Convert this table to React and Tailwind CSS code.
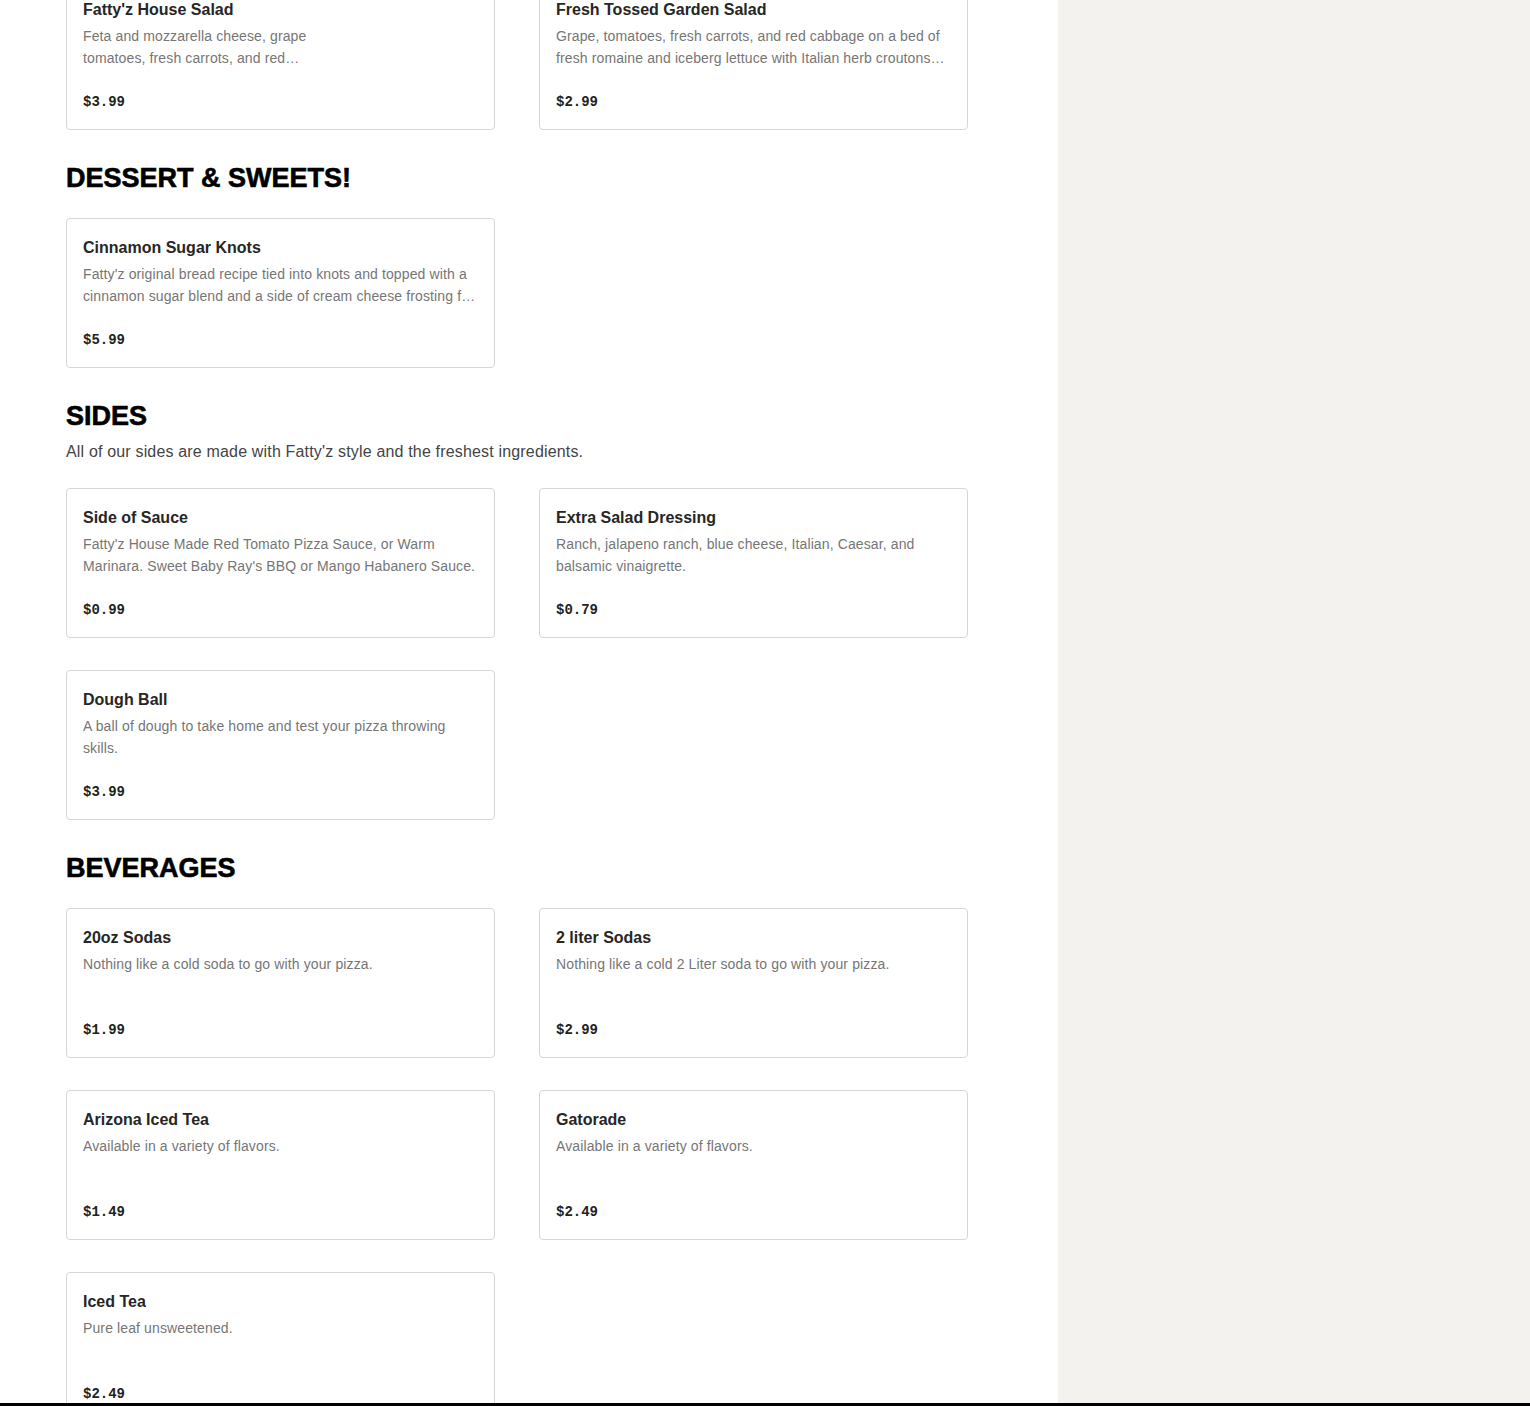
import React from "react";

const sections = [
  {
    title: null,
    items: [
      {
        name: "Fatty'z House Salad",
        desc: "Feta and mozzarella cheese, grape tomatoes, fresh carrots, and red cabbage on a bed of fresh romaine and iceberg lettuce.",
        price: "$3.99",
        narrow: true,
      },
      {
        name: "Fresh Tossed Garden Salad",
        desc: "Grape, tomatoes, fresh carrots, and red cabbage on a bed of fresh romaine and iceberg lettuce with Italian herb croutons and dressing.",
        price: "$2.99",
      },
    ],
  },
  {
    title: "Dessert & Sweets!",
    items: [
      {
        name: "Cinnamon Sugar Knots",
        desc: "Fatty'z original bread recipe tied into knots and topped with a cinnamon sugar blend and a side of cream cheese frosting for dipping.",
        price: "$5.99",
      },
    ],
  },
  {
    title: "Sides",
    note: "All of our sides are made with Fatty'z style and the freshest ingredients.",
    items: [
      {
        name: "Side of Sauce",
        desc: "Fatty'z House Made Red Tomato Pizza Sauce, or Warm Marinara. Sweet Baby Ray's BBQ or Mango Habanero Sauce.",
        price: "$0.99",
      },
      {
        name: "Extra Salad Dressing",
        desc: "Ranch, jalapeno ranch, blue cheese, Italian, Caesar, and balsamic vinaigrette.",
        price: "$0.79",
      },
      {
        name: "Dough Ball",
        desc: "A ball of dough to take home and test your pizza throwing skills.",
        price: "$3.99",
      },
    ],
  },
  {
    title: "Beverages",
    items: [
      { name: "20oz Sodas", desc: "Nothing like a cold soda to go with your pizza.", price: "$1.99" },
      { name: "2 liter Sodas", desc: "Nothing like a cold 2 Liter soda to go with your pizza.", price: "$2.99" },
      { name: "Arizona Iced Tea", desc: "Available in a variety of flavors.", price: "$1.49" },
      { name: "Gatorade", desc: "Available in a variety of flavors.", price: "$2.49" },
      { name: "Iced Tea", desc: "Pure leaf unsweetened.", price: "$2.49" },
    ],
  },
];

function ItemCard({ item }) {
  return (
    <div className="flex h-[150px] flex-col rounded-[4px] border border-[#d6d6d6] bg-white px-4 pt-[16px] pb-[17px]">
      <h3 className="text-[16px] leading-[26px] font-semibold text-[#262626]">{item.name}</h3>
      <p
        className={`mt-[2px] line-clamp-2 text-[14px] leading-[22px] tracking-[0.12px] text-[#767676] ${
          item.narrow ? "max-w-[230px]" : ""
        }`}
      >
        {item.desc}
      </p>
      <div className="mt-auto font-['Liberation_Mono',monospace] text-[14px] leading-[20px] font-bold text-[#222]">
        {item.price}
      </div>
    </div>
  );
}

export default function App() {
  return (
    <div className="flex h-[1406px] overflow-hidden border-b-[3px] border-black font-['Liberation_Sans',sans-serif]">
      <main className="w-[1058px] shrink-0 bg-white px-[66px]">
        <div className="-mt-[20px] flex w-[902px] flex-col gap-8">
          {sections.map((section, i) => (
            <section key={i}>
              {section.title && (
                <div className="mb-6">
                  <h2 className="text-[27px] leading-[32px] font-black text-black uppercase [-webkit-text-stroke:0.6px_black]">
                    {section.title}
                  </h2>
                  {section.note && (
                    <p className="mt-2 text-[16px] leading-[24px] tracking-[0.17px] text-[#444]">{section.note}</p>
                  )}
                </div>
              )}
              <div className="grid grid-cols-2 gap-x-[44px] gap-y-8">
                {section.items.map((item) => (
                  <ItemCard key={item.name} item={item} />
                ))}
              </div>
            </section>
          ))}
        </div>
      </main>
      <aside className="flex-1 bg-[#f3f2ef]" />
    </div>
  );
}
